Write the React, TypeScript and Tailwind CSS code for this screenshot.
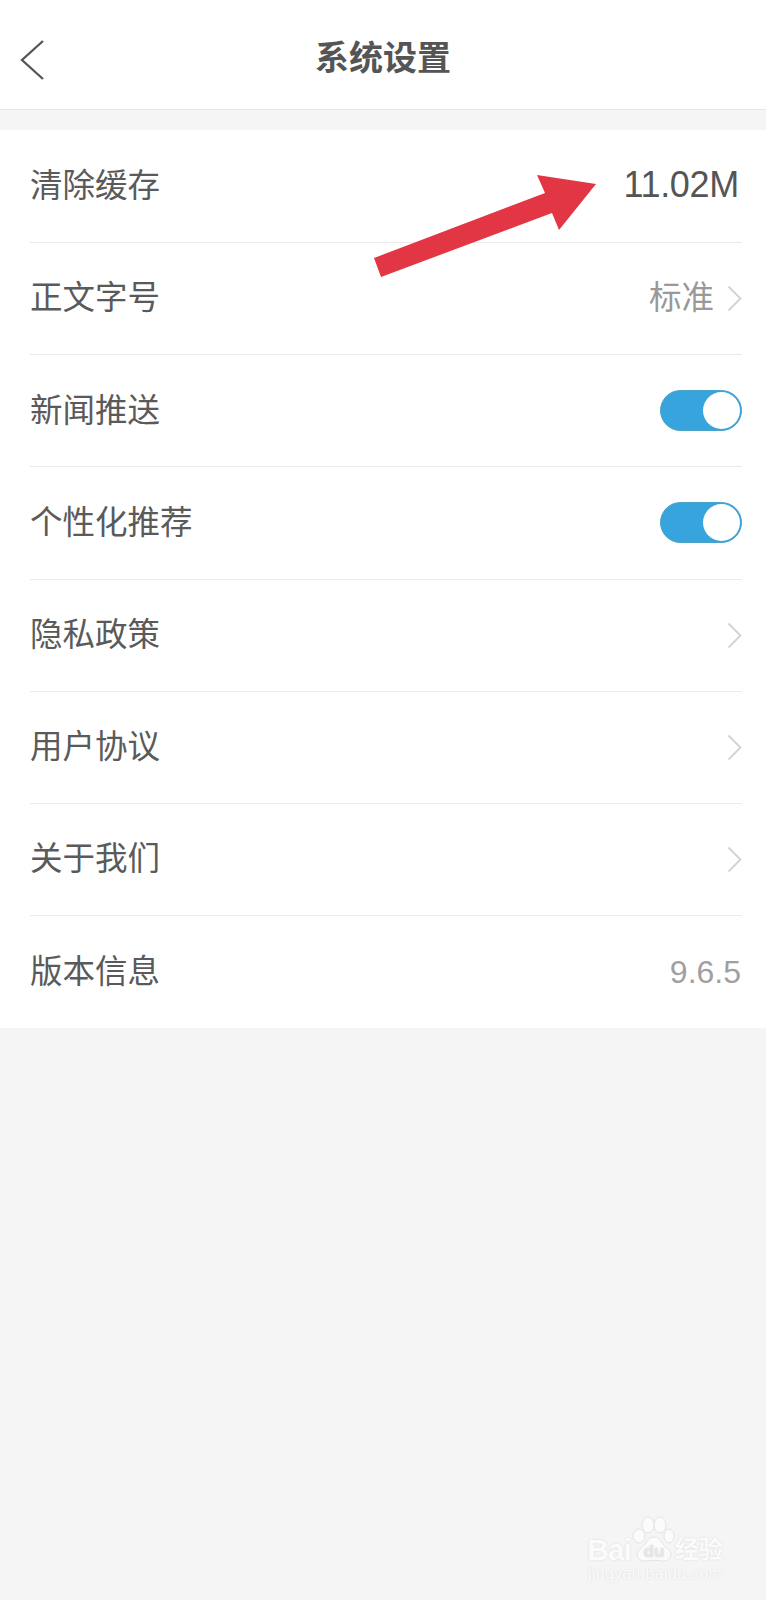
import React from "react";

const cjk = { fontFamily: '"Liberation Sans", "Noto Sans CJK SC", sans-serif' };

function Chevron() {
  return (
    <svg width="15" height="27" viewBox="0 0 15 27" fill="none" className="shrink-0">
      <path d="M1.5 1.5 L13.5 13.5 L1.5 25.5" stroke="#d2d2d2" strokeWidth="1.8" />
    </svg>
  );
}

function Toggle() {
  return (
    <div className="flex h-[41px] w-[82px] items-center justify-end rounded-full border border-[#4aa3c6] bg-[#38a4dd] pr-[1px]">
      <div className="h-[37px] w-[37px] rounded-full bg-white" />
    </div>
  );
}

function Row({ label, children, last }: { label: string; children?: React.ReactNode; last?: boolean }) {
  return (
    <div className={"ml-[30px] mr-6 flex h-[112.125px] items-center justify-between " + (last ? "" : "border-b border-[#ebebeb]")}>
      <span className="text-[32.5px] leading-none text-[#5a5a5a]">{label}</span>
      {children}
    </div>
  );
}

export default function App() {
  return (
    <div className="relative flex min-h-[1600px] w-full flex-col overflow-hidden bg-[#f5f5f5]" style={cjk}>
      <header className="relative flex h-[110px] items-center justify-center border-b border-[#e6e6e6] bg-white pt-[7px]">
        <svg width="28" height="42" viewBox="0 0 28 42" fill="none" className="absolute left-[18px] top-[39px]">
          <path d="M25 2 L4 21 L25 40" stroke="#555555" strokeWidth="2.3" />
        </svg>
        <h1 className="text-[34px] font-bold leading-none text-[#555555]">系统设置</h1>
      </header>

      <main className="mt-5 bg-white pt-[1px]">
        <Row label="清除缓存">
          <span className="mr-[3px] mb-1 text-[36px] leading-none tracking-[-0.3px] text-[#555555]">11.02M</span>
        </Row>
        <Row label="正文字号">
          <div className="flex items-center gap-[13px]">
            <span className="text-[32.5px] leading-none text-[#999999]">标准</span>
            <Chevron />
          </div>
        </Row>
        <Row label="新闻推送"><Toggle /></Row>
        <Row label="个性化推荐"><Toggle /></Row>
        <Row label="隐私政策"><Chevron /></Row>
        <Row label="用户协议"><Chevron /></Row>
        <Row label="关于我们"><Chevron /></Row>
        <Row label="版本信息" last>
          <span className="mr-[1px] text-[32px] leading-none text-[#a0a0a0]">9.6.5</span>
        </Row>
      </main>

      <svg width="766" height="300" viewBox="0 0 766 300" className="pointer-events-none absolute left-0 top-0">
        <polygon points="596,184 537,175 545,193 374,258 381,277 552,213 559,230" fill="#e23645" />
      </svg>

      <div className="absolute left-[586px] top-[1516px] flex w-[138px] flex-col items-center text-[#fbfbfb] [text-shadow:0_0_2px_#d8d8d8]">
        <div className="flex items-end">
          <span className="text-[30px] font-bold leading-[26px] tracking-[-1px]">Bai</span>
          <svg width="44" height="47" viewBox="0 0 44 47" fill="#fbfbfb" stroke="#e4e4e4" strokeWidth="1">
            <ellipse cx="8" cy="20" rx="6" ry="7" />
            <ellipse cx="17" cy="9" rx="6" ry="8" />
            <ellipse cx="29" cy="9" rx="6" ry="8" />
            <ellipse cx="38" cy="20" rx="5" ry="7" />
            <path d="M23 21 C16 21 16 28 9 33 C3 38 7 46 15 45 C20 44 26 44 31 45 C39 46 43 38 37 33 C30 28 30 21 23 21 Z" />
            <text x="23" y="41" textAnchor="middle" fontSize="17" fontWeight="700" fill="#e6e6e6" stroke="none">du</text>
          </svg>
          <span className="text-[24px] font-bold leading-[26px]">经验</span>
        </div>
        <span className="mt-[3px] text-[16px] leading-none tracking-[0.3px]">jingyan.baidu.com</span>
      </div>
    </div>
  );
}
